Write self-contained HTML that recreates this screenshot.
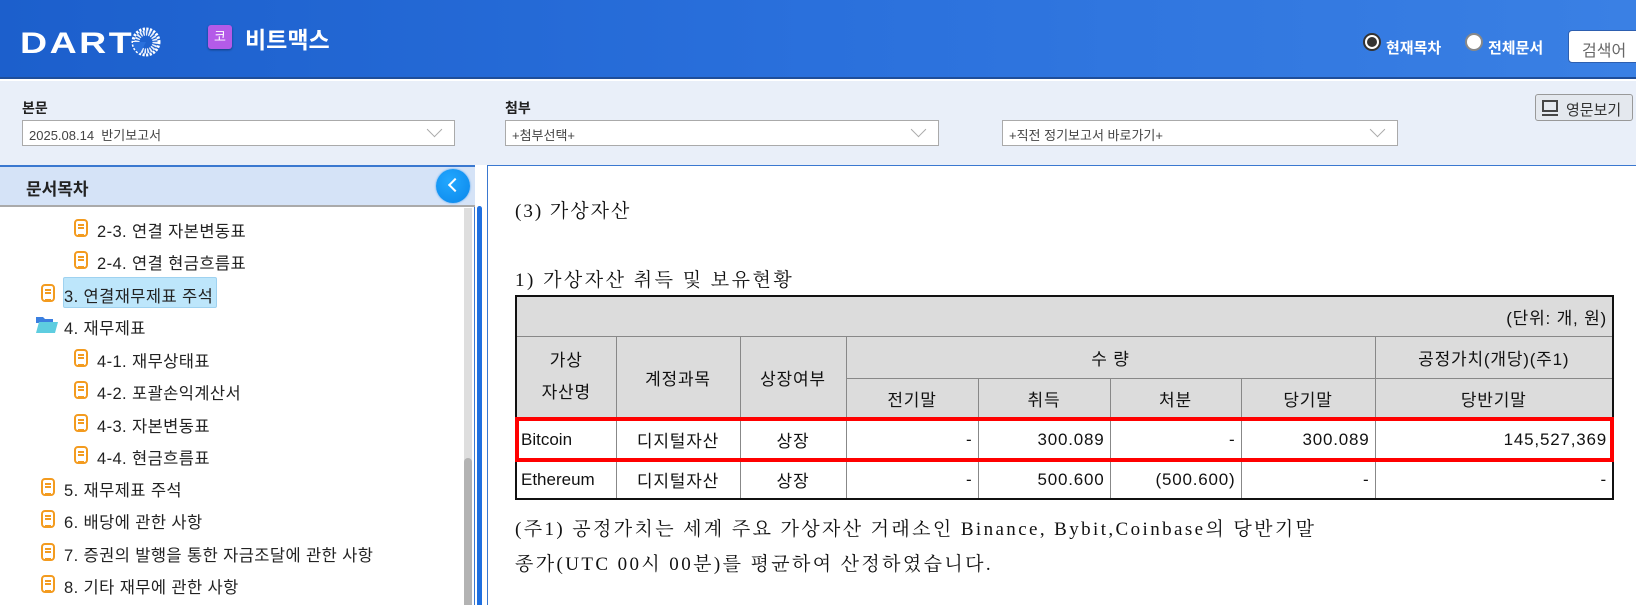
<!DOCTYPE html>
<html><head><meta charset="utf-8"><style>
*{margin:0;padding:0;box-sizing:border-box}
body{width:1636px;height:605px;overflow:hidden;position:relative;background:#fff;font-family:"Liberation Sans","Noto Sans CJK KR",sans-serif}
.a{position:absolute}
#hd{left:0;top:0;width:1636px;height:79px;background:linear-gradient(90deg,#1c5fcc 0%,#2a70dc 50%,#3a80e4 100%);border-bottom:2px solid #1f4e9a}
.dart{left:20px;top:27px;color:#fff;font-weight:bold;font-size:30px;letter-spacing:2px;font-family:"Liberation Sans",sans-serif;transform:scaleX(1.25);transform-origin:left top}
.badge{left:208px;top:25px;width:24px;height:24px;background:#b45be8;border-radius:3px;color:#fff;font-size:13px;text-align:center;line-height:24px;box-shadow:0 1px 2px rgba(0,0,0,.4)}
.title{left:245px;top:21px;color:#fff;font-weight:bold;font-size:23px}
.radio{width:18px;height:18px;border-radius:50%;background:#fff;border:2px solid #555}
.rl{color:#fff;font-weight:bold;font-size:15px}
#tb{left:0;top:81px;width:1636px;height:84px;background:#e9eff9}
.lbl{font-weight:bold;font-size:14px;color:#222}
.sel{height:26px;background:#fff;border:1px solid #aaa;font-size:13px;color:#444;padding:4px 0 0 6px}
.chev{position:absolute;right:14px;top:3px;width:11px;height:11px;border-right:1.5px solid #aaa;border-bottom:1.5px solid #aaa;transform:rotate(45deg)}
#lp{left:0;top:165px;width:475px;height:440px;border-right:1px solid #3a78d0}
#lph{left:0;top:165px;width:475px;height:42px;background:#d5e3f7;border-top:2px solid #3a78d0;border-bottom:2px solid #aaa}
.it{font-size:16.5px;color:#222;white-space:nowrap;letter-spacing:.4px}
.doc{width:14px;height:18px;border:2px solid #f39b1f;border-radius:4px;background:#fff}
.doc:before{content:"";position:absolute;left:2px;top:3px;width:6px;height:8px;border-top:2px solid #f39b1f;border-bottom:2px solid #f39b1f}
.doc:after{content:"";position:absolute;left:2px;top:6px;width:6px;border-top:2px solid #f39b1f}
table{border-collapse:collapse;font-family:"Liberation Sans","WenQuanYi Zen Hei",sans-serif;font-size:17px;color:#111;letter-spacing:.8px}
td{border:1px solid #888;text-align:center;padding:0 5px}
.g{background:#dcdcdc}
.r{text-align:right}
.serif{font-family:"Liberation Serif","Noto Serif CJK KR",serif;color:#111;white-space:nowrap}
</style></head><body>
<div id="hd" class="a"></div>
<div class="a dart">DART</div>
<svg class="a" style="left:131px;top:27px" width="30" height="30" viewBox="0 0 30 30"><circle cx="15" cy="15" r="13" fill="none" stroke="#fff" stroke-width="3" stroke-dasharray="2.2 1.4"/><circle cx="15" cy="15" r="9" fill="none" stroke="#fff" stroke-width="5" stroke-dasharray="1.6 1.2" opacity=".9"/><path d="M2 15 A13 13 0 0 0 9 26.5 L15 15Z" fill="#2a70dc"/></svg>
<div class="a badge">코</div>
<div class="a title">비트맥스</div>
<div class="a radio" style="left:1363px;top:33px;border-color:#333"><div style="margin:2px;width:10px;height:10px;border-radius:50%;background:#333"></div></div>
<div class="a rl" style="left:1386px;top:37px">현재목차</div>
<div class="a radio" style="left:1465px;top:33px;border-color:#888"></div>
<div class="a rl" style="left:1488px;top:37px">전체문서</div>
<div class="a" style="left:1568px;top:30px;width:80px;height:33px;background:#fff;border:1px solid #2d5fb0;border-radius:4px;color:#666;font-size:16px;padding:6px 0 0 13px">검색어</div>

<div id="tb" class="a"></div>
<div class="a lbl" style="left:22px;top:98px">본문</div>
<div class="a sel" style="left:22px;top:120px;width:433px">2025.08.14 &nbsp;반기보고서<span class="chev"></span></div>
<div class="a lbl" style="left:505px;top:98px">첨부</div>
<div class="a sel" style="left:505px;top:120px;width:434px">+첨부선택+<span class="chev"></span></div>
<div class="a sel" style="left:1002px;top:120px;width:396px">+직전 정기보고서 바로가기+<span class="chev"></span></div>
<div class="a" style="left:1535px;top:94px;width:98px;height:27px;background:#e4e8ee;border:1px solid #999;border-radius:3px;font-size:15px;color:#333;padding:4px 0 0 30px">영문보기
<div class="a" style="left:6px;top:5px;width:16px;height:12px;border:2px solid #444"></div><div class="a" style="left:6px;top:19px;width:16px;height:2px;background:#444"></div></div>

<div id="lp" class="a"></div>
<div id="lph" class="a"></div>
<div class="a" style="left:26px;top:175px;font-weight:bold;font-size:17px;color:#222">문서목차</div>
<div class="a" style="left:436px;top:169px;width:34px;height:34px;border-radius:50%;background:radial-gradient(circle at 40% 35%,#22a8ff,#0a86ea);box-shadow:0 0 2px #4aa0f0"></div>
<div class="a" style="left:450px;top:180px;width:10px;height:10px;border-left:2px solid #fff;border-bottom:2px solid #fff;transform:rotate(45deg)"></div>
<div class="a" style="left:464px;top:208px;width:8px;height:397px;background:#dedede"></div>
<div class="a" style="left:464px;top:458px;width:8px;height:147px;background:#b3b3b3;border-radius:4px 4px 0 0"></div>
<div class="a" style="left:477px;top:206px;width:5px;height:399px;background:#1e6fe0;border-radius:3px 3px 0 0"></div>
<div class="a" style="left:487px;top:165px;width:1149px;height:440px;border-left:1px solid #3a78d0;border-top:1px solid #3a78d0"></div>

<div class="a" style="left:63px;top:277px;width:154px;height:31px;background:#bde6fb;border:1px solid #9fd2f0;border-radius:2px"></div>
<div class="a doc" style="left:74px;top:219px"></div><div class="a it" style="left:97px;top:218px">2-3. 연결 자본변동표</div>
<div class="a doc" style="left:74px;top:251px"></div><div class="a it" style="left:97px;top:250px">2-4. 연결 현금흐름표</div>
<div class="a doc" style="left:41px;top:284px"></div><div class="a it" style="left:64px;top:283px">3. 연결재무제표 주석</div>
<svg class="a" style="left:36px;top:316px" width="22" height="18" viewBox="0 0 22 18"><path d="M0 1h7l2 2h8v4H0z" fill="#3b7fe0"/><path d="M0 17L3 6h19l-3 11z" fill="#5ecde0"/></svg><div class="a it" style="left:64px;top:315px">4. 재무제표</div>
<div class="a doc" style="left:74px;top:349px"></div><div class="a it" style="left:97px;top:348px">4-1. 재무상태표</div>
<div class="a doc" style="left:74px;top:381px"></div><div class="a it" style="left:97px;top:380px">4-2. 포괄손익계산서</div>
<div class="a doc" style="left:74px;top:414px"></div><div class="a it" style="left:97px;top:413px">4-3. 자본변동표</div>
<div class="a doc" style="left:74px;top:446px"></div><div class="a it" style="left:97px;top:445px">4-4. 현금흐름표</div>
<div class="a doc" style="left:41px;top:478px"></div><div class="a it" style="left:64px;top:477px">5. 재무제표 주석</div>
<div class="a doc" style="left:41px;top:510px"></div><div class="a it" style="left:64px;top:509px">6. 배당에 관한 사항</div>
<div class="a doc" style="left:41px;top:543px"></div><div class="a it" style="left:64px;top:542px">7. 증권의 발행을 통한 자금조달에 관한 사항</div>
<div class="a doc" style="left:41px;top:575px"></div><div class="a it" style="left:64px;top:574px">8. 기타 재무에 관한 사항</div>

<div class="a serif" style="left:515px;top:196px;font-size:19px;letter-spacing:2px">(3) 가상자산</div>
<div class="a serif" style="left:515px;top:265px;font-size:19px;letter-spacing:2.5px">1) 가상자산 취득 및 보유현황</div>
<table class="a" style="left:515px;top:295px;width:1099px;border:2px solid #111">
<colgroup><col style="width:100px"><col style="width:124px"><col style="width:106px"><col style="width:132px"><col style="width:132px"><col style="width:131px"><col style="width:134px"><col></colgroup>
<tr style="height:40px"><td class="g r" colspan="8" style="border-color:#888">(단위: 개, 원)</td></tr>
<tr style="height:42px"><td class="g" rowspan="2" style="line-height:32px">가상<br>자산명</td><td class="g" rowspan="2">계정과목</td><td class="g" rowspan="2">상장여부</td><td class="g" colspan="4">수 량</td><td class="g">공정가치(개당)(주1)</td></tr>
<tr style="height:40px"><td class="g">전기말</td><td class="g">취득</td><td class="g">처분</td><td class="g">당기말</td><td class="g">당반기말</td></tr>
<tr style="height:43px;outline:4px solid #f00;outline-offset:-3px"><td style="text-align:left;padding-left:4px;letter-spacing:0">Bitcoin</td><td>디지털자산</td><td>상장</td><td class="r">-</td><td class="r">300.089</td><td class="r">-</td><td class="r">300.089</td><td class="r">145,527,369</td></tr>
<tr style="height:38px"><td style="text-align:left;padding-left:4px;letter-spacing:0">Ethereum</td><td>디지털자산</td><td>상장</td><td class="r">-</td><td class="r">500.600</td><td class="r">(500.600)</td><td class="r">-</td><td class="r">-</td></tr>
</table>
<div class="a serif" style="left:515px;top:512px;font-size:19px;line-height:35px;letter-spacing:2.4px">(주1) 공정가치는 세계 주요 가상자산 거래소인 Binance, Bybit,Coinbase의 당반기말<br>종가(UTC 00시 00분)를 평균하여 산정하였습니다.</div>
</body></html>
